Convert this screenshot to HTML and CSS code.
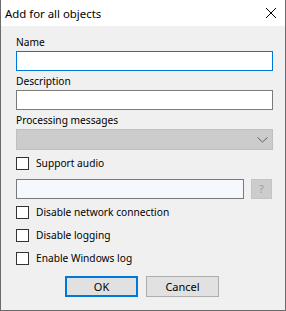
FILE: index.html
```html
<!DOCTYPE html>
<html lang="en">
<head>
  <meta charset="UTF-8" />
  <title>Add for all objects</title>
  <link rel="stylesheet" href="styles.css">
</head>
<body>

<div class="window">
  <div class="titlebar">
    <span class="title">Add for all objects</span>
    <svg class="close" width="12" height="12" viewBox="0 0 12 12">
      <path d="M1 1 L11 11 M11 1 L1 11" stroke="#000" stroke-width="1" fill="none"/>
    </svg>
  </div>

  <div class="content">
    <label class="field-label">Name</label>
    <input class="textbox focused" type="text" />

    <label class="field-label">Description</label>
    <input class="textbox" type="text" />

    <label class="field-label">Processing messages</label>
    <div class="combo">
      <svg class="chevron" width="11" height="6" viewBox="0 0 11 6">
        <polyline points="0.5,0.5 5.5,5 10.5,0.5" stroke="#606060" stroke-width="1" fill="none"/>
      </svg>
    </div>

    <div class="check-row first">
      <span class="checkbox"></span>
      <span>Support audio</span>
    </div>

    <div class="audio-row">
      <div class="textbox disabled"></div>
      <div class="help-btn">?</div>
    </div>

    <div class="check-row net">
      <span class="checkbox"></span>
      <span>Disable network connection</span>
    </div>
    <div class="check-row">
      <span class="checkbox"></span>
      <span>Disable logging</span>
    </div>
    <div class="check-row">
      <span class="checkbox"></span>
      <span>Enable Windows log</span>
    </div>

    <div class="buttons">
      <button class="btn default">OK</button>
      <button class="btn">Cancel</button>
    </div>
  </div>
</div>

</body>
</html>
```

FILE: styles.css
```css
* {
  box-sizing: border-box;
}

body {
  margin: 0;
  font-family: 'Segoe UI', 'Noto Sans', sans-serif;
  font-size: 10.2px;
  line-height: 15px;
  color: #000;
}

.window {
  width: 286px;
  height: 311px;
  background: #f0f0f0;
  border: 1px solid #6b6b6b;
  border-top: none;
  display: flex;
  flex-direction: column;
}

.titlebar {
  height: 26px;
  background: #fff;
  display: flex;
  align-items: center;
  justify-content: space-between;
  padding: 0 8px 0 4px;
}

.title {
  font-size: 11.4px;
}

.close {
  display: block;
}

.content {
  padding: 8px 12px 0 15px;
  display: flex;
  flex-direction: column;
}

.field-label {
  display: block;
  line-height: 16px;
  margin: 2px 0 1px;
}

.field-label:first-child {
  margin-top: 0;
}

.textbox {
  display: block;
  width: 100%;
  height: 20px;
  margin: 0;
  padding: 0 3px;
  border: 1px solid #7a7a7a;
  background: #fff;
  font: inherit;
  outline: none;
}

.textbox.focused {
  border-color: #0078d7;
}

.textbox.disabled {
  background: #f5f8fc;
}

.combo {
  height: 21px;
  background: #cccccc;
  border: 1px solid #bfbfbf;
  display: flex;
  align-items: center;
  justify-content: flex-end;
  padding-right: 4px;
}

.chevron {
  display: block;
}

.check-row {
  display: flex;
  align-items: center;
  gap: 7px;
  height: 13px;
  margin-top: 10px;
  white-space: nowrap;
}

.check-row.first {
  margin-top: 7px;
}

.check-row.net {
  margin-top: 7px;
}

.checkbox {
  width: 13px;
  height: 13px;
  border: 1px solid #333;
  background: #fff;
  flex: none;
}

.audio-row {
  display: flex;
  gap: 7px;
  margin-top: 9px;
  padding-right: 1px;
}

.audio-row .textbox {
  flex: 1;
  width: auto;
}

.help-btn {
  width: 21px;
  height: 20px;
  flex: none;
  background: #cccccc;
  border: 1px solid #c4c4c4;
  color: #a0a0a0;
  text-align: center;
  line-height: 18px;
  font-size: 11px;
}

.buttons {
  display: flex;
  gap: 8px;
  margin-top: 11px;
  padding-left: 49px;
}

.btn {
  width: 73px;
  height: 21px;
  padding: 0;
  font: inherit;
  font-size: 11px;
  color: #000;
  background: #e1e1e1;
  border: 1px solid #adadad;
}

.btn.default {
  border-color: #0078d7;
  box-shadow: inset 0 0 0 1px #0078d7;
}
```
